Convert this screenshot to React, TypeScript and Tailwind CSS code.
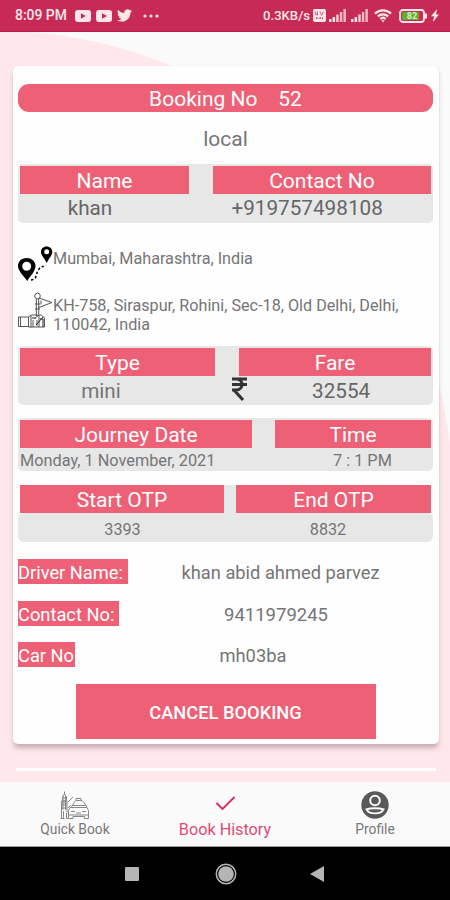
import React from 'react';

const StatusBar: React.FC = () => (
  <header className="h-[32px] shrink-0 bg-[#c72b55] text-[#ffe6ea] flex items-center pl-[15px] pr-[11px] border-b border-[#bd1e49]">
    <span className="text-[13.900px] font-medium leading-none whitespace-nowrap w-[60px]">8:09 PM</span>
    {[0, 1].map((i) => (
      <svg key={i} width="16" height="12" viewBox="0 0 16 12" className="mr-[5px] shrink-0">
        <rect width="16" height="12" rx="3" fill="currentColor" />
        <path d="M6 3.2v5.6l4.8-2.8z" fill="#c72b55" />
      </svg>
    ))}
    <svg width="15" height="13" viewBox="0 0 24 20" className="shrink-0" fill="currentColor">
      <path d="M24 2.4a10 10 0 0 1-2.8.8A5 5 0 0 0 23.3.5a10 10 0 0 1-3.1 1.2 4.9 4.9 0 0 0-8.4 4.5A14 14 0 0 1 1.7 1a4.9 4.9 0 0 0 1.5 6.6A5 5 0 0 1 1 7v.1a4.9 4.9 0 0 0 4 4.8 5 5 0 0 1-2.3.1 4.9 4.9 0 0 0 4.6 3.4A9.900 9.900 0 0 1 0 17.500a14 14 0 0 0 7.600 2.200c9 0 14.300-7.600 14-14.700A10 10 0 0 0 24 2.400z" />
    </svg>
    <svg width="16" height="4" viewBox="0 0 16 4" className="ml-[11px] shrink-0" fill="currentColor">
      <circle cx="2" cy="2" r="1.6" />
      <circle cx="8" cy="2" r="1.6" />
      <circle cx="14" cy="2" r="1.6" />
    </svg>
    <div className="ml-auto flex items-center">
      <span className="text-[13.100px] font-medium leading-none whitespace-nowrap">0.3KB/s</span>
      <svg width="13" height="13" viewBox="0 0 13 13" className="ml-[3px]">
        <rect width="13" height="13" rx="2" fill="currentColor" />
        <path d="M2.500 2.500v3h2M4.500 2.500v4M7 2.500l1.500 4L10.500 2.500M3.500 10V8l2 2 2-2v2M9.500 8v2.500" stroke="#d9607f" fill="none" strokeWidth="1" />
      </svg>
      {[0, 1].map((i) => (
        <svg key={i} width="18" height="13" viewBox="0 0 18 13" className={i === 0 ? 'ml-[3px]' : 'ml-[4px]'} fill="currentColor">
          <rect x="0" y="10" width="2.500" height="3" />
          <rect x="3.600" y="8" width="2.500" height="5" />
          <rect x="7.200" y="5.500" width="2.500" height="7.500" opacity=".85" />
          <rect x="10.800" y="3" width="2.500" height="10" opacity=".75" />
          <rect x="14.400" y="0" width="2.500" height="13" opacity=".75" />
        </svg>
      ))}
      <svg width="18" height="14" viewBox="0 0 18 14" className="ml-[5px]" fill="none" stroke="currentColor" strokeWidth="2.300">
        <path d="M1 4.700a11.500 11.500 0 0 1 16 0M3.800 7.500a7.500 7.500 0 0 1 10.400 0M6.300 10a4 4 0 0 1 5.400 0" />
        <path d="M7.300 11.300h3.400L9 13.500z" fill="currentColor" stroke="none" />
      </svg>
      <svg width="28" height="14" viewBox="0 0 28 14" className="ml-[7px]">
        <rect x="1" y="1" width="24" height="12" rx="3" fill="none" stroke="currentColor" strokeWidth="1.800" />
        <rect x="3" y="3" width="17" height="8" rx="1" fill="#62ad2b" />
        <path d="M26 4.500h2v5h-2z" fill="currentColor" />
        <text x="13" y="10.200" textAnchor="middle" fontSize="9" fontWeight="700" fill="#d5edc4">82</text>
      </svg>
      <svg width="8" height="13" viewBox="0 0 8 13" className="ml-[4px]" fill="currentColor">
        <path d="M6 0 0 7.200h3L2 13l6-7.500H5z" />
      </svg>
    </div>
  </header>
);

const Heading: React.FC<{ className: string; children: React.ReactNode }> = ({ className, children }) => (
  <div className={`h-[28px] bg-[#ed6075] text-white text-[21px] leading-[30px] text-center ${className}`}>{children}</div>
);

const PinsIcon: React.FC = () => (
  <svg width="35" height="36" viewBox="0 0 35 36" className="shrink-0">
    <path fillRule="evenodd" d="M8.500 12C3.500 12 0 15.600 0 20c0 5 5 9 9.200 15C13 29 17.500 25 17.500 20c0-4.500-4-8-9-8zm.2 3.800a4.500 4.500 0 1 1 0 9 4.500 4.500 0 0 1 0-9z" />
    <path fillRule="evenodd" d="M28.700.500C25.200.500 23 2.800 23 5.800c0 4 3.500 6 5.700 11.200C31 12 34.300 9.500 34.300 5.800c0-3-2.500-5.300-5.600-5.300zm0 2.800a2.500 2.500 0 1 1 0 5 2.500 2.500 0 0 1 0-5z" />
    <path d="M13 34c7-1 4-6 8-11 2-3 4-2 7-4" fill="none" stroke="#000" strokeWidth="1.500" strokeDasharray="2.500 2" />
  </svg>
);

const FlagIcon: React.FC = () => (
  <svg width="35" height="37" viewBox="0 0 35 37" className="shrink-0" fill="none" stroke="#555" strokeWidth="1">
    <circle cx="19.500" cy="4" r="2.800" />
    <path d="M18.300 7v17M20.700 7v15M21 6l13 4.500L21 15.500M23 8.500v4M17 12h5M17 17h5" />
    <path d="M.500 25h10v9.500H.500zM2.500 25v9.500M10.500 25l3-2h10l3 3v9h-16zM13 23v12.500M15 28v7M17 26l4-3v12M19 28v6" />
    <path d="m18 33 7-8M22 27h3v8M14 26h4" stroke="#222" />
  </svg>
);

const TaxiIcon: React.FC = () => (
  <svg width="30" height="29" viewBox="0 0 30 29" fill="none" stroke="#888" strokeWidth="1">
    <path d="M4.500.500v3M2.500 6l2-3 2 3v4h-4zM1.500 10H7v7H1.500zM3 4.500v14.500M5.500 4.500v14.500M2.500 7h4M1.500 12H7M1.500 14H7M1.500 17v10.500M7 17v4.500M3.500 20v7M.500 27.500h4M6.500 22v5.500h2M8 11l5-5M8 17l3-3" />
    <path d="M16 9.500V7.500h5v2M11.500 16l3-5 1.500-1.500h6l1.500 1.500 3.500 5M10 16.500h17l1.500 3v8h-4v-2H13v2H8.500v-8zM12 14.500h14M8.500 24h20M11 20.500h4M22 20.500h4M16 22h5" />
  </svg>
);

const BookingCard: React.FC = () => (
  <section className="mt-[34px] ml-[12.500px] w-[426px] h-[678px] shrink-0 bg-[#fefefe] rounded-[5px] px-[5.500px] pt-[18px] shadow-[0_5px_5px_-1px_rgba(110,70,80,0.36),0_0_2px_rgba(0,0,0,0.07)] text-[#757575]">
    <h1 className="h-[28px] rounded-[11px] bg-[#ed6075] text-white text-[21px] leading-[30px] text-center font-normal whitespace-pre">Booking No    52</h1>
    <p className="h-[52px] text-[21px] leading-[55px] text-center">local</p>

    {/* Customer */}
    <div className="h-[59px] rounded-[5px] bg-[#e7e7e7] px-[2px] pt-[1.500px]">
      <div className="flex justify-between">
        <Heading className="w-[169px]">Name</Heading>
        <Heading className="w-[218px]">Contact No</Heading>
      </div>
      <div className="flex text-[20.700px] leading-[29px] text-[#666]">
        <span className="w-[140px] text-center">khan</span>
        <span className="ml-[71.500px]">+919757498108</span>
      </div>
    </div>

    {/* Route */}
    <div className="mt-[23px] h-[37px] flex">
      <PinsIcon />
      <p className="text-[16.200px] leading-[26px]">Mumbai, Maharashtra, India</p>
    </div>
    <div className="mt-[9px] h-[54px] flex">
      <FlagIcon />
      <p className="pt-[4px] text-[16.200px] leading-[19px] whitespace-nowrap">KH-758, Siraspur, Rohini, Sec-18, Old Delhi, Delhi,<br />110042, India</p>
    </div>

    {/* Fare */}
    <div className="h-[59px] rounded-[5px] bg-[#e7e7e7] px-[2px] pt-[1.500px]">
      <div className="flex justify-between">
        <Heading className="w-[195px]">Type</Heading>
        <Heading className="w-[192px]">Fare</Heading>
      </div>
      <div className="flex items-start text-[20.700px] leading-[30px] text-[#666]">
        <span className="w-[162px] text-center text-[#757575]">mini</span>
        <svg width="15" height="24" viewBox="0 0 15 24" className="ml-[50px] mt-[1.500px]" fill="none" stroke="#333" strokeWidth="3">
          <path d="M0 2h15M0 7.500h15M0 13h4c8 0 8-11 0-11M2 13l9 10" />
        </svg>
        <span className="ml-[65px]">32554</span>
      </div>
    </div>

    {/* Journey */}
    <div className="mt-[13px] h-[53px] rounded-[5px] bg-[#e7e7e7] px-[2px] pt-[1.500px]">
      <div className="flex justify-between">
        <Heading className="w-[232px]">Journey Date</Heading>
        <Heading className="w-[156px]">Time</Heading>
      </div>
      <div className="flex text-[16.300px] leading-[25px]">
        <span className="whitespace-nowrap w-[313px]">Monday, 1 November, 2021</span>
        <span>7 : 1 PM</span>
      </div>
    </div>

    {/* OTP */}
    <div className="mt-[14px]">
      <div className="flex justify-between rounded-t-[3px] bg-[#e7e7e7] mx-[2px]">
        <Heading className="w-[204px]">Start OTP</Heading>
        <Heading className="w-[195px]">End OTP</Heading>
      </div>
      <div className="h-[29px] rounded-[6px] bg-[#e7e7e7] flex text-[16.200px] leading-[34px]">
        <span className="w-[209px] text-center">3393</span>
        <span className="w-[202px] text-center">8832</span>
      </div>
    </div>

    {/* Driver */}
    <dl className="mt-[17px] text-[18.300px] leading-[28px]">
      <div className="flex h-[41.500px] items-start">
        <dt className="w-[110px] h-[25px] bg-[#ed6075] text-white whitespace-nowrap">Driver Name:</dt>
        <dd className="ml-[53.500px]">khan abid ahmed parvez</dd>
      </div>
      <div className="flex h-[41.500px] items-start">
        <dt className="w-[101px] h-[25px] bg-[#ed6075] text-white whitespace-nowrap">Contact No:</dt>
        <dd className="ml-[105px] text-[18.500px]">9411979245</dd>
      </div>
      <div className="flex h-[42px] items-start">
        <dt className="w-[57px] h-[25px] bg-[#ed6075] text-white whitespace-nowrap">Car No</dt>
        <dd className="ml-[144.500px]">mh03ba</dd>
      </div>
    </dl>
    <button type="button" className="block ml-[57.500px] w-[300px] h-[54.500px] bg-[#ed6075] text-white text-[18.300px] font-medium leading-[57px]">CANCEL BOOKING</button>
  </section>
);

const BottomNav: React.FC = () => (
  <nav className="h-[65px] shrink-0 bg-[#fafafa] border-b border-[#999] flex text-[13.800px] text-[#777] leading-none">
    <a className="w-[150px] flex flex-col items-center pt-[9px]">
      <TaxiIcon />
      <span className="mt-[3px]">Quick Book</span>
    </a>
    <a className="w-[150px] flex flex-col items-center pt-[12px] text-[#e14b75]">
      <svg width="26" height="20" viewBox="0 0 26 20" fill="none" stroke="#d9265c" strokeWidth="1.800">
        <path d="m4.500 9 6 6L22.500 3" />
      </svg>
      <span className="mt-[7.500px] text-[16.200px]">Book History</span>
    </a>
    <a className="w-[150px] flex flex-col items-center pt-[9px]">
      <svg width="28" height="28" viewBox="0 0 28 28">
        <circle cx="14" cy="14" r="13.700" fill="#595959" />
        <circle cx="14" cy="9.500" r="4.800" fill="none" stroke="#fafafa" strokeWidth="2" />
        <path d="M5.500 18.300c4-1.500 13-1.500 17 0-2.500 5.400-14.500 5.400-17 0z" fill="none" stroke="#fafafa" strokeWidth="1.900" />
      </svg>
      <span className="mt-[4px]">Profile</span>
    </a>
  </nav>
);

const SystemBar: React.FC = () => (
  <footer className="h-[53px] shrink-0 bg-black flex items-center pl-[125px]">
    <span className="w-[14px] h-[14px] bg-[#b5b5b5] rounded-[1px]" />
    <svg width="22" height="22" viewBox="0 0 22 22" className="ml-[75.500px]">
      <circle cx="11" cy="11" r="9.700" fill="none" stroke="#b5b5b5" strokeWidth="1.500" />
      <circle cx="11" cy="11" r="7.800" fill="#b5b5b5" />
    </svg>
    <svg width="14" height="16" viewBox="0 0 14 16" className="ml-[73px]">
      <path d="M14 0v16L0 8z" fill="#b5b5b5" />
    </svg>
  </footer>
);

const App: React.FC = () => (
  <div className="relative w-[450px] h-[900px] overflow-hidden bg-[#fafafa] font-['Roboto',sans-serif]">
    <svg width="450" height="900" viewBox="0 0 450 900" className="absolute inset-0">
      <path d="M0 32h30c45 3 100 16 144 35 120 52 225 170 265 318 4 17 8 36 11 58v457H0z" fill="#fee8eb" />
    </svg>
    <div className="relative flex h-full flex-col">
      <StatusBar />
      <main className="h-[750px] shrink-0 flex flex-col">
        <BookingCard />
        <div className="mt-[23.500px] ml-[16px] h-[3px] w-[420px] bg-white" />
      </main>
      <BottomNav />
      <SystemBar />
    </div>
  </div>
);

export default App;
